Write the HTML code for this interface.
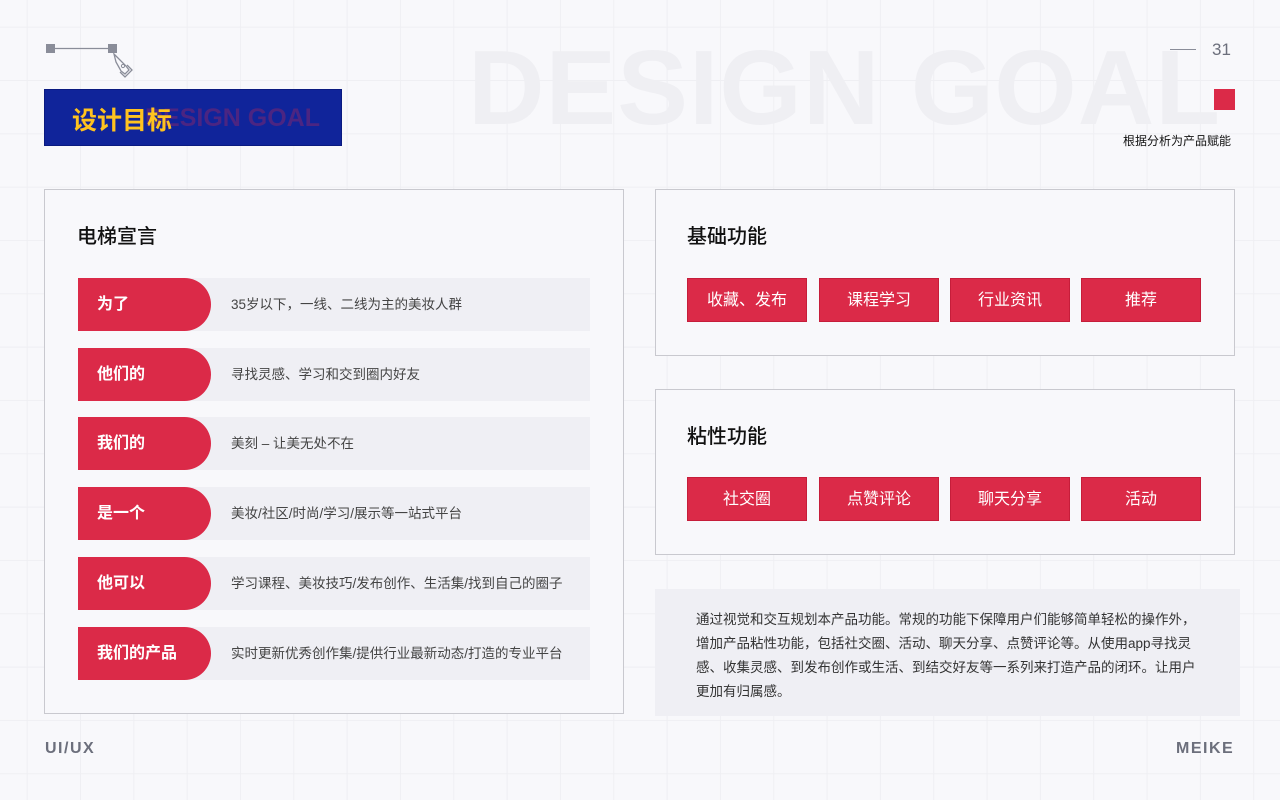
<!DOCTYPE html>
<html><head><meta charset="utf-8"><style>
*{margin:0;padding:0;box-sizing:border-box}
body{width:1280px;height:800px;position:relative;overflow:hidden;background:#f8f8fb;font-family:"Liberation Sans","Noto Sans CJK SC",sans-serif;
background-image:linear-gradient(#efeff3 1px,transparent 1px),linear-gradient(90deg,#efeff3 1px,transparent 1px);background-size:53.33px 53.33px;background-position:26.67px 26.67px}
.a{position:absolute}
.big{left:468px;top:28px;font-size:106px;font-weight:bold;color:#efeff3;letter-spacing:1px;white-space:nowrap}
.box{border:1px solid #c9c9cf;background:#f8f8fb}
.h{font-size:20px;color:#111;font-weight:500}
.pill{position:absolute;left:78px;width:133px;height:53px;background:#db2a48;border-radius:0 27px 27px 0;color:#fff;font-size:16px;font-weight:bold;padding-left:19px;line-height:53px}
.row{position:absolute;left:78px;width:512px;height:53px;background:#efeff4}
.row span{position:absolute;left:153px;top:0;line-height:53px;font-size:13.5px;color:#444}
.tag{position:absolute;width:120px;height:44px;background:#db2a48;color:#fff;font-size:16px;text-align:center;line-height:44px;border:1px solid #c61d3a}
</style></head><body>
<div class="a big">DESIGN GOAL</div>
<svg class="a" style="left:44px;top:42px" width="92" height="36" viewBox="0 0 92 36">
<rect x="2" y="2" width="9" height="9" fill="#8a8d99"/><line x1="11" y1="6.5" x2="65" y2="6.5" stroke="#8a8d99" stroke-width="1.2"/>
<rect x="64" y="2" width="9" height="9" fill="#8a8d99"/>
<path d="M70 12 L82 24 L85 28 L81 32 L77 29 L72 20 Z" fill="none" stroke="#8a8d99" stroke-width="1.3"/>
<circle cx="79" cy="24" r="1.6" fill="none" stroke="#8a8d99"/>
<path d="M76 30 L81 35 L88 28 L83 23" fill="none" stroke="#8a8d99" stroke-width="1.3"/>
</svg>
<div class="a" style="left:44px;top:89px;width:298px;height:57px;background:#10249a;border:1px solid #0a1a80;overflow:hidden">
<div class="a" style="left:100px;top:14px;font-size:25px;font-weight:bold;color:#4b2582;white-space:nowrap">DESIGN GOAL</div>
<div class="a" style="left:27px;top:11px;font-size:25px;font-weight:bold;color:#ffc21f;white-space:nowrap">设计目标</div>
</div>
<div class="a" style="left:1170px;top:49px;width:26px;height:1px;background:#8a8d99"></div>
<div class="a" style="left:1212px;top:40px;font-size:17px;color:#6c6f7c">31</div>
<div class="a" style="left:1214px;top:89px;width:21px;height:21px;background:#db2a48"></div>
<div class="a" style="left:1123px;top:132px;font-size:12px;color:#111">根据分析为产品赋能</div>

<div class="a box" style="left:44px;top:189px;width:580px;height:525px"></div>
<div class="a h" style="left:77px;top:220px">电梯宣言</div>
<div class="row" style="top:278px"><span>35岁以下，一线、二线为主的美妆人群</span></div><div class="pill" style="top:278px">为了</div>
<div class="row" style="top:348px"><span>寻找灵感、学习和交到圈内好友</span></div><div class="pill" style="top:348px">他们的</div>
<div class="row" style="top:417px"><span>美刻 – 让美无处不在</span></div><div class="pill" style="top:417px">我们的</div>
<div class="row" style="top:487px"><span>美妆/社区/时尚/学习/展示等一站式平台</span></div><div class="pill" style="top:487px">是一个</div>
<div class="row" style="top:557px"><span>学习课程、美妆技巧/发布创作、生活集/找到自己的圈子</span></div><div class="pill" style="top:557px">他可以</div>
<div class="row" style="top:627px"><span>实时更新优秀创作集/提供行业最新动态/打造的专业平台</span></div><div class="pill" style="top:627px">我们的产品</div>

<div class="a box" style="left:655px;top:189px;width:580px;height:167px"></div>
<div class="a h" style="left:687px;top:220px">基础功能</div>
<div class="tag" style="left:687px;top:278px">收藏、发布</div>
<div class="tag" style="left:819px;top:278px">课程学习</div>
<div class="tag" style="left:950px;top:278px">行业资讯</div>
<div class="tag" style="left:1081px;top:278px">推荐</div>

<div class="a box" style="left:655px;top:389px;width:580px;height:166px"></div>
<div class="a h" style="left:687px;top:420px">粘性功能</div>
<div class="tag" style="left:687px;top:477px">社交圈</div>
<div class="tag" style="left:819px;top:477px">点赞评论</div>
<div class="tag" style="left:950px;top:477px">聊天分享</div>
<div class="tag" style="left:1081px;top:477px">活动</div>

<div class="a" style="left:655px;top:589px;width:585px;height:127px;background:#efeff4"></div>
<div class="a" style="left:696px;top:608px;width:510px;font-size:13.5px;line-height:24px;color:#333">通过视觉和交互规划本产品功能。常规的功能下保障用户们能够简单轻松的操作外，增加产品粘性功能，包括社交圈、活动、聊天分享、点赞评论等。从使用app寻找灵感、收集灵感、到发布创作或生活、到结交好友等一系列来打造产品的闭环。让用户更加有归属感。</div>

<div class="a" style="left:45px;top:740px;font-size:16px;font-weight:bold;color:#6c6f7c;letter-spacing:1.5px">UI/UX</div>
<div class="a" style="left:1176px;top:740px;font-size:16px;font-weight:bold;color:#6c6f7c;letter-spacing:1.5px">MEIKE</div>
</body></html>
